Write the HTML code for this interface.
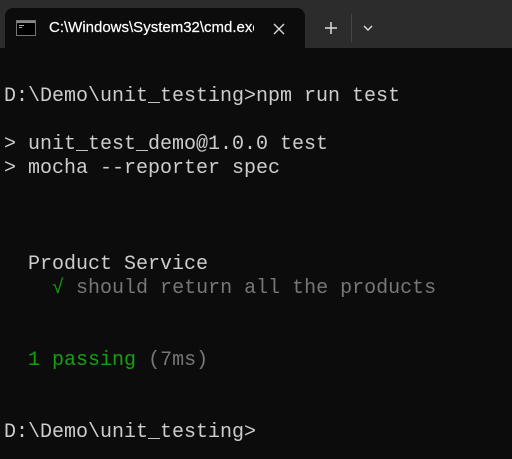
<!DOCTYPE html>
<html><head><style>
body{margin:0;width:512px;height:459px;background:#0c0c0c;overflow:hidden;position:relative;font-family:"Liberation Sans",sans-serif}
.bar{position:absolute;left:0;top:0;width:512px;height:48px;background:#2c2c2c}
.tab{position:absolute;left:5px;top:8px;width:300px;height:40px;background:#0c0c0c;border-radius:8px 8px 0 0}
.title{position:absolute;left:49px;top:19px;font-size:15px;color:#fff;width:205px;overflow:hidden;white-space:nowrap;-webkit-text-stroke:0.2px #fff}
.term{position:absolute;left:4px;top:61px;font-family:"Liberation Mono",monospace;font-size:20px;line-height:24px;color:#cccccc;white-space:pre}
.g{color:#13a10e}.d{color:#767676}
</style></head><body>
<div class="bar"></div>
<div class="tab"></div>
<svg style="position:absolute;left:16px;top:20px" width="20" height="16"><rect x="0.5" y="0.5" width="19" height="15" fill="#000" stroke="#777"/><rect x="1" y="1" width="18" height="2" fill="#888"/><rect x="3" y="5" width="5" height="1" fill="#aaa"/><rect x="3" y="7" width="3" height="1" fill="#aaa"/></svg>
<div class="title">C:\Windows\System32\cmd.exe</div>
<svg style="position:absolute;left:272px;top:22px" width="14" height="14"><path d="M2 2L12 12M12 2L2 12" stroke="#ddd" stroke-width="1.3"/></svg>
<svg style="position:absolute;left:324px;top:21px" width="14" height="14"><path d="M7 1V13M1 7H13" stroke="#ddd" stroke-width="1.5"/></svg>
<div style="position:absolute;left:351px;top:14px;width:1px;height:28px;background:#444"></div>
<svg style="position:absolute;left:362px;top:24px" width="12" height="8"><path d="M2 2L6 6L10 2" stroke="#ddd" stroke-width="1.4" fill="none"/></svg>
<div class="term">
D:\Demo\unit_testing&gt;npm run test

&gt; unit_test_demo@1.0.0 test
&gt; mocha --reporter spec



  Product Service
    <span class="g">√</span> <span class="d">should return all the products</span>


  <span class="g">1 passing</span> <span class="d">(7ms)</span>


D:\Demo\unit_testing&gt;</div>
</body></html>
